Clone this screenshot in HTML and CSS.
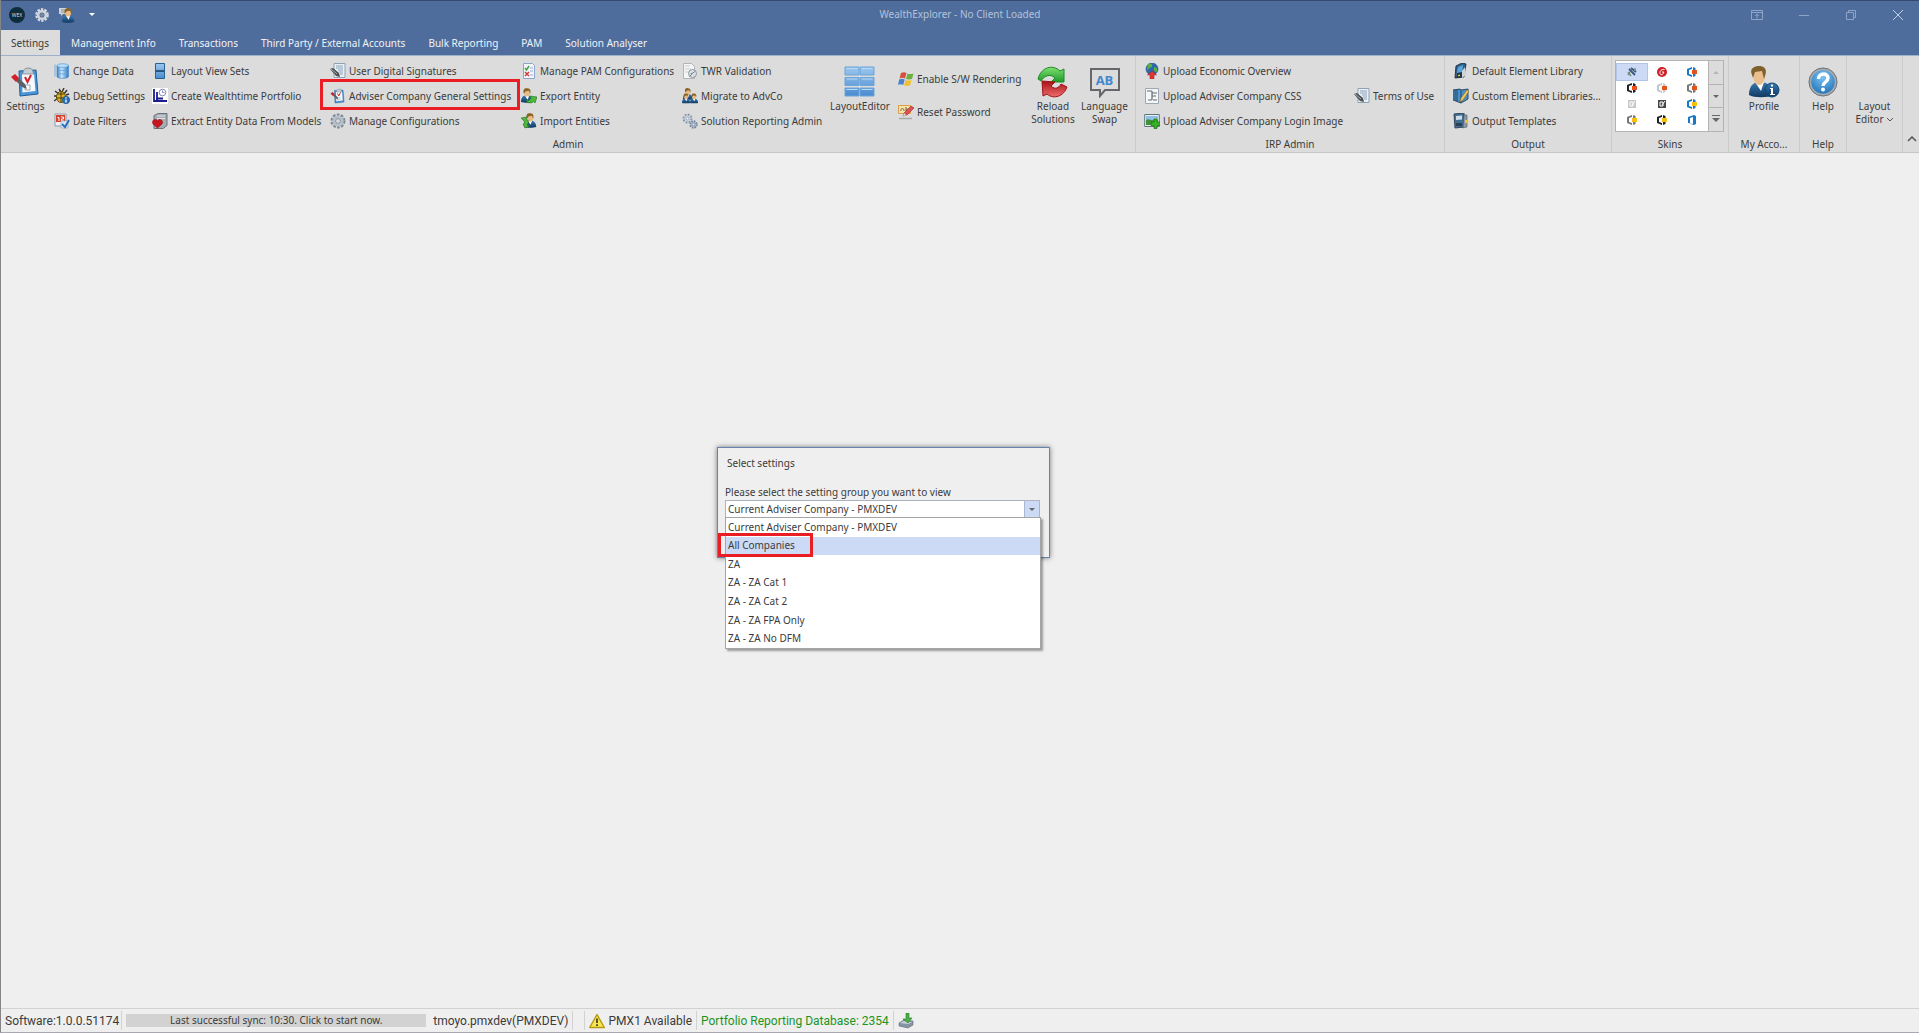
FILE: index.html
```
<!DOCTYPE html>
<html lang="en">
<head>
  <meta charset="UTF-8" />
  <meta name="viewport" content="width=device-width, initial-scale=1.0" />
  <title>WealthExplorer - No Client Loaded</title>
  <link rel="stylesheet" href="styles.css">
</head>
<body>
  <!-- icon sprites -->
  <svg class="sprites" aria-hidden="true">
    <defs>
      <linearGradient id="gBlue" x1="0" y1="0" x2="0" y2="1"><stop offset="0" stop-color="#9cc8ee"/><stop offset="1" stop-color="#4b8bd0"/></linearGradient>
      <linearGradient id="gDb" x1="0" y1="0" x2="1" y2="0"><stop offset="0" stop-color="#2f79c4"/><stop offset=".4" stop-color="#c9e6fb"/><stop offset="1" stop-color="#2c74bd"/></linearGradient>
      <linearGradient id="gGreen" x1="0" y1="0" x2="0" y2="1"><stop offset="0" stop-color="#7ee070"/><stop offset="1" stop-color="#1f9a2a"/></linearGradient>
      <linearGradient id="gRed" x1="0" y1="0" x2="0" y2="1"><stop offset="0" stop-color="#a80f16"/><stop offset="1" stop-color="#ee6d6d"/></linearGradient>
      <radialGradient id="gHelp" cx=".5" cy=".3" r=".8"><stop offset="0" stop-color="#7cc4f4"/><stop offset="1" stop-color="#1266ae"/></radialGradient>
      <linearGradient id="gBody" x1="0" y1="0" x2="0" y2="1"><stop offset="0" stop-color="#3a78b0"/><stop offset="1" stop-color="#0f3a63"/></linearGradient>
    </defs>
    <symbol id="clipboard" viewBox="0 0 32 32">
      <path d="M9 5l17-1 2 24-18 2z" fill="#4b94d6" stroke="#1f609c"/>
      <path d="M12 8l12-1 1.500 18-13 1.500z" fill="#f6f8fb"/>
      <path d="M13 7c0-3 2-5 5-5s5 1 5 4l1 2H12z" fill="#c3cbd3" stroke="#7b858f" stroke-width=".8"/>
      <path d="M15 11l2.500 5 3.500-7" fill="none" stroke="#d2222a" stroke-width="2"/>
      <path d="M15 19h5v5h-5z" fill="#fff" stroke="#9aa4ae"/>
      <path d="M2 11l3-2 10 9 2 5-5-2z" fill="#5b6068"/><path d="M1 11l4-3 4 4-3 4z" fill="#d22026"/>
    </symbol>
    <symbol id="database" viewBox="0 0 16 16">
      <path d="M3 2.500v11C3 16 14.500 16 14.500 13.500v-11z" fill="url(#gDb)" stroke="#3b86cc" stroke-width=".6"/>
      <ellipse cx="8.700" cy="2.600" rx="5.700" ry="1.900" fill="#b7dcf8" stroke="#4f96d6" stroke-width=".6"/>
      <path d="M3 6c0 2 11.500 2 11.500 0M3 9.500c0 2 11.500 2 11.500 0M1 1.500v12" fill="none" stroke="#5da2de" stroke-width=".8"/>
    </symbol>
    <symbol id="bug" viewBox="0 0 16 16">
      <path d="M1 3l4 3M13 2l-3 4M0 8h4M0 13l4-3M12 7l3-1M5 1l2 3M10 0L8 4" stroke="#35332a" stroke-width="1.400"/>
      <ellipse cx="7" cy="9" rx="4.500" ry="5.500" fill="#e6b820" stroke="#5d4a10"/><path d="M3.500 6h7M7 4v10M3 10h8" stroke="#463a15"/>
      <circle cx="12" cy="12" r="3.700" fill="#2a71b8" stroke="#134a80" stroke-width=".6"/><path d="M12 11.500v3M12 9.300v1.200" stroke="#fff" stroke-width="1.300"/>
    </symbol>
    <symbol id="datefilter" viewBox="0 0 16 16">
      <path d="M1 1h11v12H1z" fill="#eef1f5" stroke="#8c9aaa"/><path d="M2 2h9v7H2z" fill="#d8402e"/>
      <path d="M3.500 4.500h1.500V8M7 4h2.500v2H7.500v2H10" fill="none" stroke="#fff"/>
      <path d="M7 8h7v7H7z" fill="#dbe8f5" stroke="#8ca3bb" stroke-width=".6"/><path d="M8 11l3 3 4-7" fill="none" stroke="#2d72b8" stroke-width="2"/>
    </symbol>
    <symbol id="layoutsets" viewBox="0 0 16 16">
      <path d="M3.500.5h9v7h-9zM3.500 8.500h9v7h-9z" fill="url(#gBlue)" stroke="#29618f"/><path d="M3 7.500h10v1.500H3z" fill="#24557e"/>
    </symbol>
    <symbol id="portfolio" viewBox="0 0 16 16">
      <path d="M0 0h16v16H0z" fill="#fff"/><path d="M2 1v12h13M5 4v6.500h6" fill="none" stroke="#1c1c8e" stroke-width="1.800"/><path d="M2 13h3M5 10v4" stroke="#1c1c8e" stroke-width="2"/>
      <circle cx="10.500" cy="4.500" r="3.300" fill="#fff" stroke="#8686c4"/><path d="M10.500 2.500v2h2" fill="none" stroke="#8686c4"/>
    </symbol>
    <symbol id="heartdb" viewBox="0 0 16 16">
      <path d="M2 2.500L6 .5h9v12l-4 3H2z" fill="#a6acb4" stroke="#6b727c"/><path d="M5 3h8M5 5.500h8" stroke="#e1e5e9"/>
      <path d="M5.500 15L1 11c-2-4 3-6 4.500-3C7 5 12 7 10 11z" fill="#c9151e" stroke="#8a0e14" stroke-width=".6"/>
    </symbol>
    <symbol id="signature" viewBox="0 0 16 16">
      <path d="M4 .5h11v14H4z" fill="#e9eff5" stroke="#8fa2b4"/><path d="M6 3h7M6 5h7M8 7h5M9 9h4M10 11h3" stroke="#8ba4bd"/>
      <path d="M0 6l3-1 6 5 1 4-4-1z" fill="#4d5052"/><path d="M1 6l6 5" stroke="#a9adb0"/>
    </symbol>
    <symbol id="gear" viewBox="0 0 16 16">
      <circle cx="8" cy="8" r="6" fill="none" stroke="#7d8894" stroke-width="3" stroke-dasharray="2.500 1.270"/>
      <circle cx="8" cy="8" r="4.200" fill="none" stroke="#b5c0cb" stroke-width="3"/><circle cx="8" cy="8" r="2.400" fill="#dcdcdc" stroke="#76828e" stroke-width=".8"/>
    </symbol>
    <symbol id="geartitle" viewBox="0 0 16 16">
      <circle cx="8" cy="8" r="5.500" fill="none" stroke="#d7dce4" stroke-width="2.600" stroke-dasharray="2.300 1.155"/>
      <circle cx="8" cy="8" r="3.800" fill="none" stroke="#d0d5dc" stroke-width="2.500"/><circle cx="8" cy="8" r="1.800" fill="#7b8aa0"/>
    </symbol>
    <symbol id="gears" viewBox="0 0 16 16">
      <circle cx="5.500" cy="5.500" r="4" fill="#cfd7e2" stroke="#8795a8" stroke-width="2" stroke-dasharray="1.800 1.300"/><circle cx="5.500" cy="5.500" r="1.500" fill="#f0f0f0" stroke="#8795a8" stroke-width=".7"/>
      <circle cx="11.500" cy="11.500" r="3.200" fill="#bcc8d8" stroke="#71829a" stroke-width="2" stroke-dasharray="1.500 1"/><circle cx="11.500" cy="11.500" r="1.200" fill="#f0f0f0" stroke="#71829a" stroke-width=".7"/>
    </symbol>
    <symbol id="checkdoc" viewBox="0 0 16 16">
      <path d="M2.500.5h9l2 2v13h-11z" fill="#f2f6fc" stroke="#8fa4cc"/><path d="M9 5h3M9 8h3M9 12h3" stroke="#8faed8"/>
      <path d="M4 5l1.500 2L8 3" fill="none" stroke="#3fa33c" stroke-width="1.500"/><path d="M4 9l4 4M8 9l-4 4" stroke="#d23a3a" stroke-width="1.500"/>
    </symbol>
    <symbol id="person" viewBox="0 0 16 16">
      <path d="M0 15c0-5 2-7 6-7s7 2 7 7c-3 1-10 1-13 0z" fill="url(#gBody)"/><path d="M4.500 8.500l2.500 4 1.500-4z" fill="#fff"/>
      <ellipse cx="6.500" cy="5" rx="3.200" ry="4" fill="#e8ba86"/><path d="M3 6C1.500 0 5 0 6.500.2 10.500 0 10.500 4 9.800 6L8.500 3 5 3.500z" fill="#8a6324"/>
    </symbol>
    <symbol id="export" viewBox="0 0 16 16">
      <use href="#person" width="15" height="15"/><path d="M5 12c3 1 4 0 5-2l-1-2 7 1-2 6-1.500-1.500C10 16 6 15 5 12z" fill="#4fb83c" stroke="#1d7018" stroke-width=".6"/>
    </symbol>
    <symbol id="import" viewBox="0 0 16 16">
      <use href="#person" x="3" width="15" height="15"/><path d="M0 5l6-1-1 2c3 1 3 4 1 6l3 1-5 2-2-4h1c1-2 0-3-1-4z" fill="#4fb83c" stroke="#1d7018" stroke-width=".6"/>
    </symbol>
    <symbol id="people" viewBox="0 0 16 16">
      <use href="#person" x="1" width="12" height="12"/><use href="#person" y="5" width="10" height="11"/><use href="#person" x="8" y="5" width="10" height="11"/>
    </symbol>
    <symbol id="twrdoc" viewBox="0 0 16 16">
      <path d="M1.500.5h8l3 3v12h-11z" fill="#f6f6f6" stroke="#b0b4b8"/><path d="M3 3h5M3 6h6M3 9h4" stroke="#c7ccd0"/>
      <circle cx="10.500" cy="10.500" r="4" fill="#dde2e6" stroke="#8c959d"/><path d="M8.500 10.500h1.500l3-2M10.500 10.500l-3 3" stroke="#7c858d" fill="none"/>
    </symbol>
    <symbol id="tiles" viewBox="0 0 32 32">
      <path d="M1 1h14v8H1zM16 1h14v8H16zM1 11.500h14v8H1zM16 11.500h14v8H16zM1 22h14v8H1zM16 22h14v8H16z" fill="url(#gBlue)" stroke="#6ba4d8"/>
      <path d="M2.500 2.500h11M17.500 2.500h11M2.500 13h11M17.500 13h11M2.500 23.500h11M17.500 23.500h11" stroke="#b7d9f6"/>
    </symbol>
    <symbol id="windows" viewBox="0 0 16 16">
      <path d="M3 2c2-1 4-1 5.500 0L7 7.500c-1.500-1-3.500-1-5.500 0z" fill="#d9503c"/><path d="M9.500 2.500c2 1 4 .5 6 0L14 8c-2 .6-4 .6-6 0z" fill="#6bb13f"/>
      <path d="M1.200 8.500c2-1 4-1 5.500 0L5.200 14c-2-1-4-1-5.200 0z" fill="#4a82cf"/><path d="M7.500 9c2 1 4 .5 6 0L12 14.500c-2 .6-4 .6-6 0z" fill="#f0c030"/>
    </symbol>
    <symbol id="password" viewBox="0 0 16 16">
      <path d="M.5 1.500h12v8H.5z" fill="#fbe3a8" stroke="#dba048"/><path d="M3 7c-1-3 3-3 3-1v1M8 3v4c3 1 3-3 0-2" fill="none" stroke="#6d6650"/>
      <path d="M5 12l1-3 7-7 3 2-7 7z" fill="#e05050" stroke="#8a3030" stroke-width=".6"/><path d="M5 12l1-3 2.500 2.500z" fill="#d7dce0"/><path d="M1 14.500h13" stroke="#a9a9a9" stroke-width="1.500"/>
    </symbol>
    <symbol id="reload" viewBox="0 0 32 32">
      <path d="M1 13C4 1 16-2 23 5l4-2v13l-13 0 4-4c-5-5-11-2-14 3z" fill="url(#gGreen)" stroke="#1d8a24"/>
      <path d="M5 15l13 1-4 4c4 4 8 2 10-2l6 3c-3 9-13 13-20 7l-4 2z" fill="url(#gRed)" stroke="#9c1218"/>
    </symbol>
    <symbol id="bubble" viewBox="0 0 32 32"><path d="M2 3h28v21H16l-5 6v-6H2z" fill="none" stroke="#66676b" stroke-width="2"/></symbol>
    <symbol id="globe" viewBox="0 0 16 16">
      <circle cx="8" cy="6" r="6" fill="#2b68b0" stroke="#254c80" stroke-width=".6"/><path d="M4 1c3-1 5 0 4 3-3 0-3 3-5 3zM10 4l3 1v4l-3-1z" fill="#58b045"/>
      <path d="M8 8l4.500 4H10v4H6v-4H3.500z" fill="#dd3535" stroke="#a32020" stroke-width=".5"/>
    </symbol>
    <symbol id="css" viewBox="0 0 16 16"><path d="M1.500.5h13v15h-13z" fill="#f5f6f8" stroke="#9da7b1"/><path d="M3 3h5M8 3v9M8 5h5M8 8h4M4 12h4M9 12h4" stroke="#666c72" stroke-width="1.200"/></symbol>
    <symbol id="imageadd" viewBox="0 0 16 16">
      <path d="M.7 1.500h14.600v12H.7z" fill="#e8eef2" stroke="#62747e"/><path d="M2 3h12v5H2z" fill="#8fc0e4"/><path d="M2 7c3-2 5 1 7 0s3 0 5 0v5H2z" fill="#41903c"/>
      <path d="M10 6h3v3h3v3.500h-3v3h-3v-3H7V9h3z" fill="#37b324" stroke="#19750f" stroke-width=".7"/>
    </symbol>
    <symbol id="library" viewBox="0 0 16 16"><path d="M3 3l6-3 4 1-2 13-9 1z" fill="#315c86" stroke="#24384c"/><path d="M5 4l5-2-1 11-6 1z" fill="#5aa2dc"/><path d="M9 8l3-4 1 8-4 3z" fill="#cdd4da"/><path d="M4 10l5-1v5l-6 1z" fill="#263442"/><path d="M5 12l2-.5v1.500l-2 .3z" fill="#f2cf3c"/></symbol>
    <symbol id="libedit" viewBox="0 0 16 16"><path d="M0 2l7-1 1 1 7-1v10l-7 4-8-3z" fill="#4a8fc8" stroke="#294c6a"/><path d="M4 1.500V13M8 2v13M2 2v10" stroke="#23496b"/><path d="M7 14l1-4 6-8 2 1-6 9z" fill="#f0c760" stroke="#8f6a24" stroke-width=".6"/></symbol>
    <symbol id="template" viewBox="0 0 16 16"><path d="M1 1l10-1v14l-9 1z" fill="#446d92" stroke="#30465a"/><path d="M3 3l6-.5v4L3 7z" fill="#c9dcea"/><path d="M11 2h3v12l-4 1z" fill="#8d98a3" stroke="#4d5863" stroke-width=".6"/><path d="M12 7h2v3h-2z" fill="#f0c83e"/><path d="M3 10h6v3H3z" fill="#2b4056"/></symbol>
    <symbol id="profile" viewBox="0 0 32 32">
      <path d="M1 29C1 20 5 16 12 16s13 4 13 13c-5 3-19 3-24 0z" fill="url(#gBody)"/><path d="M7 16l6 9 3-9z" fill="#fff"/>
      <path d="M5 8c0-6 12-6 12 0 0 6-2 11-6 11S5 14 5 8z" fill="#e9c08d"/><path d="M4 9C1 2 7 0 11 0s9 2 6 10l-1 3-2-8-7 1-2 6z" fill="#80602c"/>
      <circle cx="24" cy="24" r="7" fill="url(#gBody)" stroke="#0c4778"/><path d="M22 22h3v6h2v1h-5v-1h1v-5h-1zM23 18.500h2v2h-2z" fill="#fff"/>
    </symbol>
    <symbol id="help" viewBox="0 0 32 32">
      <circle cx="16" cy="16" r="13" fill="url(#gHelp)" stroke="#a6abb0" stroke-width="2.500"/><circle cx="16" cy="16" r="14" fill="none" stroke="#6f747a"/>
      <path d="M11.500 13c0-7 10-6 9.500-1 0 4-5 4-5 8" fill="none" stroke="#fff" stroke-width="3.400"/><circle cx="16" cy="23.500" r="2" fill="#fff"/>
    </symbol>
    <symbol id="wex" viewBox="0 0 16 16"><circle cx="8" cy="8" r="8" fill="#0d2c3c"/></symbol>
    <symbol id="chatuser" viewBox="0 0 16 16"><path d="M0 1h8v6H4l-2 2V7H0z" fill="#cfd3d6"/><path d="M2 3h5M2 5h4" stroke="#8e959c"/><use href="#person" x="3" y="1" width="15" height="15"/></symbol>
    <symbol id="warning" viewBox="0 0 16 16"><path d="M8 1.500L15.300 14.500H.7z" fill="#f7e552" stroke="#b89a12" stroke-width="1.400" stroke-linejoin="round"/><path d="M8 5.500v4.500M8 11.300v1.800" stroke="#3b3a24" stroke-width="1.700"/></symbol>
    <symbol id="download" viewBox="0 0 16 16"><path d="M1 10l5-3 9 1v4l-5 3-9-2z" fill="#8794a4" stroke="#5f6b79" stroke-width=".6"/><path d="M2 10l4-2 8 1-4 2z" fill="#c9d3de"/><path d="M8 0h3v5h3l-4 5-5-4h3z" fill="#4fae48" stroke="#1f7a1e" stroke-width=".6"/></symbol>
    <!-- skin gallery: currentColor is the door, --badge the small square -->
    <symbol id="office" viewBox="0 0 10 10"><path d="M0 2l5-2v2L2 3v4l3 1v2L0 8zM6 0l2.500 1v8L6 10z" fill="currentColor"/><path d="M5 3h5v4H5z" class="badge"/></symbol>
    <symbol id="officeplain" viewBox="0 0 10 10"><path d="M1 2l6-2 2 1v8l-2 1-6-2V8l5 1V2L3 3v5L1 8z" fill="currentColor"/></symbol>
    <symbol id="skinsquare" viewBox="0 0 10 10"><path d="M1 1h8v8H1z" fill="currentColor"/><path d="M3 3h3v4H3zM5 6l3-4" fill="none" stroke="#fff"/></symbol>
    <symbol id="skinx" viewBox="0 0 10 10"><path d="M2 2l6 6M4 1l5 4" fill="none" stroke="#38547f" stroke-width="1.800"/><path d="M1 5l3 4M8 1v3M1 8l2-3" stroke="#6f8f7c" stroke-width="1.400"/></symbol>
    <symbol id="skinc" viewBox="0 0 10 10"><circle cx="5" cy="5" r="5" fill="#cf1f28"/><path d="M7.500 2.500C4 2 2.500 4.500 3 6.500s3.500 1.500 3.800-1.500H5" fill="none" stroke="#fff"/></symbol>
  </svg>

  <header class="titlebar">
    <div class="quick">
      <button class="wex" aria-label="Application menu"><svg class="i16"><use href="#wex"/></svg><span>WEX</span></button>
      <button aria-label="Options"><svg class="i16"><use href="#geartitle"/></svg></button>
      <button aria-label="Clients"><svg class="i16"><use href="#chatuser"/></svg></button>
      <button aria-label="Customise toolbar"><span class="caret light"></span></button>
    </div>
    <h1>WealthExplorer - No Client Loaded</h1>
    <div class="winbuttons">
      <button aria-label="Ribbon display"><svg viewBox="0 0 12 12"><path d="M.5 1.500h11v9H.5zM.5 3.500h11M6 9.500v-4M4 7l2-2 2 2"/></svg></button>
      <button aria-label="Minimise"><svg viewBox="0 0 12 12"><path d="M1 6.500h10"/></svg></button>
      <button aria-label="Restore"><svg viewBox="0 0 12 12"><path d="M1.500 3.500h7v7h-7zM3.500 3.500v-2h7v7h-2"/></svg></button>
      <button class="close" aria-label="Close"><svg viewBox="0 0 12 12"><path d="M1 1l10 10M11 1L1 11"/></svg></button>
    </div>
  </header>

  <nav class="tabs">
    <button class="active">Settings</button>
    <button>Management Info</button>
    <button>Transactions</button>
    <button>Third Party / External Accounts</button>
    <button>Bulk Reporting</button>
    <button>PAM</button>
    <button>Solution Analyser</button>
  </nav>

  <section class="ribbon">
    <div class="group">
      <div class="items admin">
        <button class="big"><svg class="i32"><use href="#clipboard"/></svg>Settings</button>
        <div class="col">
          <button class="cmd"><svg class="i16"><use href="#database"/></svg>Change Data</button>
          <button class="cmd"><svg class="i16"><use href="#bug"/></svg>Debug Settings</button>
          <button class="cmd"><svg class="i16"><use href="#datefilter"/></svg>Date Filters</button>
        </div>
        <div class="col">
          <button class="cmd"><svg class="i16"><use href="#layoutsets"/></svg>Layout View Sets</button>
          <button class="cmd"><svg class="i16"><use href="#portfolio"/></svg>Create Wealthtime Portfolio</button>
          <button class="cmd"><svg class="i16"><use href="#heartdb"/></svg>Extract Entity Data From Models</button>
        </div>
        <div class="col">
          <button class="cmd"><svg class="i16"><use href="#signature"/></svg>User Digital Signatures</button>
          <button class="cmd marked"><svg class="i16"><use href="#clipboard"/></svg>Adviser Company General Settings</button>
          <button class="cmd"><svg class="i16"><use href="#gear"/></svg>Manage Configurations</button>
        </div>
        <div class="col">
          <button class="cmd"><svg class="i16"><use href="#checkdoc"/></svg>Manage PAM Configurations</button>
          <button class="cmd"><svg class="i16"><use href="#export"/></svg>Export Entity</button>
          <button class="cmd"><svg class="i16"><use href="#import"/></svg>Import Entities</button>
        </div>
        <div class="col">
          <button class="cmd"><svg class="i16"><use href="#twrdoc"/></svg>TWR Validation</button>
          <button class="cmd"><svg class="i16"><use href="#people"/></svg>Migrate to AdvCo</button>
          <button class="cmd"><svg class="i16"><use href="#gears"/></svg>Solution Reporting Admin</button>
        </div>
        <button class="big"><svg class="i32"><use href="#tiles"/></svg>LayoutEditor</button>
        <div class="col two">
          <button class="cmd"><svg class="i16"><use href="#windows"/></svg>Enable S/W Rendering</button>
          <button class="cmd"><svg class="i16"><use href="#password"/></svg>Reset Password</button>
        </div>
        <button class="big"><svg class="i32"><use href="#reload"/></svg>Reload<br>Solutions</button>
        <button class="big lang"><svg class="i32"><use href="#bubble"/></svg><b>AB</b>Language<br>Swap</button>
      </div>
      <div class="caption">Admin</div>
    </div>

    <div class="group">
      <div class="items irp">
        <div class="col">
          <button class="cmd"><svg class="i16"><use href="#globe"/></svg>Upload Economic Overview</button>
          <button class="cmd"><svg class="i16"><use href="#css"/></svg>Upload Adviser Company CSS</button>
          <button class="cmd"><svg class="i16"><use href="#imageadd"/></svg>Upload Adviser Company Login Image</button>
        </div>
        <div class="col middle">
          <button class="cmd"><svg class="i16"><use href="#signature"/></svg>Terms of Use</button>
        </div>
      </div>
      <div class="caption">IRP Admin</div>
    </div>

    <div class="group">
      <div class="items output">
        <div class="col">
          <button class="cmd"><svg class="i16"><use href="#library"/></svg>Default Element Library</button>
          <button class="cmd"><svg class="i16"><use href="#libedit"/></svg>Custom Element Libraries...</button>
          <button class="cmd"><svg class="i16"><use href="#template"/></svg>Output Templates</button>
        </div>
      </div>
      <div class="caption">Output</div>
    </div>

    <div class="group skins">
      <div class="items">
        <div class="gallery">
          <div class="swatches">
            <button class="selected" aria-label="Skin 1"><svg><use href="#skinx"/></svg></button>
            <button aria-label="Skin 2"><svg><use href="#skinc"/></svg></button>
            <button class="blue orange" aria-label="Skin 3"><svg><use href="#office"/></svg></button>
            <button class="black orange" aria-label="Skin 4"><svg><use href="#office"/></svg></button>
            <button class="pale orange" aria-label="Skin 5"><svg><use href="#office"/></svg></button>
            <button class="grey orange" aria-label="Skin 6"><svg><use href="#office"/></svg></button>
            <button class="pale" aria-label="Skin 7"><svg><use href="#skinsquare"/></svg></button>
            <button class="dark" aria-label="Skin 8"><svg><use href="#skinsquare"/></svg></button>
            <button class="blue yellow" aria-label="Skin 9"><svg><use href="#office"/></svg></button>
            <button class="grey yellow" aria-label="Skin 10"><svg><use href="#office"/></svg></button>
            <button class="black yellow" aria-label="Skin 11"><svg><use href="#office"/></svg></button>
            <button class="blue" aria-label="Skin 12"><svg><use href="#officeplain"/></svg></button>
          </div>
          <div class="scroller">
            <button aria-label="Scroll up" disabled><span class="caret up"></span></button>
            <button aria-label="Scroll down"><span class="caret"></span></button>
            <button aria-label="More skins"><span class="caret more"></span></button>
          </div>
        </div>
      </div>
      <div class="caption">Skins</div>
    </div>

    <div class="group account">
      <div class="items"><button class="big"><svg class="i32"><use href="#profile"/></svg>Profile</button></div>
      <div class="caption">My Acco...</div>
    </div>
    <div class="group helpbox">
      <div class="items"><button class="big"><svg class="i32"><use href="#help"/></svg>Help</button></div>
      <div class="caption">Help</div>
    </div>
    <div class="group layout">
      <div class="items"><button class="big"><svg class="i32"></svg>Layout<span>Editor <svg class="chev" viewBox="0 0 8 6"><path d="M1 1l3 3 3-3"/></svg></span></button></div>
    </div>
    <button class="collapse" aria-label="Collapse ribbon"><svg viewBox="0 0 10 6"><path d="M1 5l4-4 4 4"/></svg></button>
  </section>

  <main>
    <div class="dialog" role="dialog" aria-labelledby="dlgTitle">
      <h2 id="dlgTitle">Select settings</h2>
      <label for="settingGroup">Please select the setting group you want to view</label>
      <div class="combo">
        <select id="settingGroup"><option>Current Adviser Company - PMXDEV</option></select>
        <span class="drop"><span class="caret"></span></span>
        <ul class="options" role="listbox">
          <li>Current Adviser Company - PMXDEV</li>
          <li class="hover">All Companies</li>
          <li>ZA</li>
          <li>ZA - ZA Cat 1</li>
          <li>ZA - ZA Cat 2</li>
          <li>ZA - ZA FPA Only</li>
          <li>ZA - ZA No DFM</li>
        </ul>
      </div>
    </div>
  </main>

  <footer class="status">
    <span class="cell version">Software:1.0.0.51174</span>
    <button class="sync">Last successful sync: 10:30. Click to start now.</button>
    <span class="cell user">tmoyo.pmxdev(PMXDEV)</span>
    <span class="cell blank"></span>
    <span class="cell"><svg class="i16"><use href="#warning"/></svg>PMX1 Available</span>
    <span class="cell db">Portfolio Reporting Database: 2354</span>
    <span class="cell last"><svg class="i16"><use href="#download"/></svg></span>
  </footer>
</body>
</html>
```
FILE: styles.css
```
*, *::before, *::after { box-sizing: border-box; }
body {
  margin: 0;
  height: 100vh;
  display: flex;
  flex-direction: column;
  background: #efefef;
  border-left: 1px solid #858585;
  border-bottom: 1px solid #a9a9b4;
  font: 10px/13px "Noto Sans", sans-serif;
  color: #3b3b3b;
  overflow: hidden;
}
button { margin: 0; padding: 0; border: 0; background: none; font: inherit; color: inherit; white-space: nowrap; }
svg { display: block; flex: none; }
.sprites { position: absolute; width: 0; height: 0; }
.i16 { width: 16px; height: 16px; }
.i32 { width: 32px; height: 32px; }

.caret { display: block; width: 6px; height: 3px; border: 3px solid transparent; border-top-color: #666; border-bottom: 0; }
.caret.light { border-top-color: #fff; }
.caret.up { border-top: 0; border-bottom: 3px solid #b5b5b5; }
.caret.more { position: relative; width: 8px; height: 4px; border-width: 4px 4px 0; }
.caret.more::before { content: ""; position: absolute; left: -4px; top: -7px; width: 8px; height: 1px; background: #666; }

/* title bar */
.titlebar {
  height: 30px; flex: none; display: grid; grid-template-columns: 1fr auto 1fr; align-items: center;
  padding-bottom: 2px; background: #4f6d9c; border-top: 1px solid #34496c;
}
.titlebar h1 { margin: 0; font-size: 10px; font-weight: 400; color: #b3c2da; }
.quick { display: flex; align-items: center; gap: 9px; padding-left: 8px; }
.quick button:last-child { margin-left: 5px; }
.wex { position: relative; }
.wex span { position: absolute; inset: 0; font-size: 5px; line-height: 16px; text-align: center; color: #d5dde2; }
.winbuttons { display: flex; justify-content: flex-end; padding-right: 15px; gap: 35px; }
.winbuttons svg { width: 12px; height: 12px; fill: none; stroke: #8fa4c6; }
.winbuttons .close svg { stroke: #c3cfe2; }

.tabs { height: 25px; flex: none; display: flex; background: #4f6d9c; }
.tabs button { padding: 2px 12px 0 11px; color: #f0f3f8; }
.tabs .active { padding: 2px 11px 0 10px; background: #dcdcdc; color: #3b3b3b; }

/* ribbon */
.ribbon { height: 98px; flex: none; display: flex; background: #dcdcdc; border-top: 1px solid #9fb0ca; border-bottom: 1px solid #c6c6c6; }
.group { display: flex; flex-direction: column; border-right: 1px solid #cbcbcb; }
.items { flex: 1; display: flex; padding-top: 3px; }
.caption { height: 15px; line-height: 14px; text-align: center; }
.admin { display: grid; grid-template-columns: 49px 98px 178px 191px 161px 148px 68px 134px 50px 53px; padding-right: 4px; }
.irp { display: grid; grid-template-columns: 210px 94px; padding-left: 4px; }
.output { width: 166px; padding-left: 4px; }
.col { display: flex; flex-direction: column; gap: 1px; align-items: flex-start; }
.col.middle { padding-top: 25px; }
.col.two { padding-top: 8px; gap: 9px; }
.cmd { height: 24px; display: flex; align-items: center; gap: 3px; padding: 0 4px; }
.big { display: flex; flex-direction: column; align-items: center; padding-top: 7px; }
.big .i32 { margin-bottom: 2px; }
.marked { position: relative; }
.marked::after { content: ""; position: absolute; left: -6px; top: -5px; width: 200px; height: 31px; border: 3px solid #ea1c24; }
.lang { position: relative; }
.lang b { position: absolute; top: 14px; left: 0; right: 0; font: bold 13px/14px "Open Sans", sans-serif; color: #4287cf; }

.skins { width: 117px; }
.account { width: 71px; }
.helpbox { width: 47px; }
.layout { width: 56px; }
.account .big, .helpbox .big, .layout .big { flex: 1; }
.layout .big span { display: flex; align-items: center; gap: 2px; }
.chev { width: 8px; height: 6px; fill: none; stroke: #555; }
.gallery { display: flex; height: 72px; margin: 1px 0 0 3px; width: 109px; border: 1px solid #b4b4b4; background: #fff; }
.swatches { flex: 1; display: grid; grid-template-columns: repeat(3, 30px); grid-auto-rows: 16px; padding: 3px 1px; }
.swatches button { display: flex; align-items: center; justify-content: center; }
.swatches svg { width: 10px; height: 10px; }
.swatches .selected { background: #cddaf5; outline: 1px solid #b3c4e6; }
.blue { color: #1976c8; }
.black { color: #222; }
.pale { color: #c6c6cc; }
.grey { color: #777; }
.dark { color: #484848; }
.orange { --badge: #e8501e; }
.yellow { --badge: #f8bf12; }
.badge { fill: var(--badge, currentColor); }
.scroller { width: 16px; display: flex; flex-direction: column; background: #dcdcdc; border-left: 1px solid #b4b4b4; }
.scroller button { flex: 1; display: flex; align-items: center; justify-content: center; }
.scroller button + button { border-top: 1px solid #b4b4b4; }
.collapse { margin-left: auto; align-self: flex-end; padding: 0 2px 10px; }
.collapse svg { width: 10px; height: 6px; fill: none; stroke: #555; stroke-width: 1.5; }

/* work area */
main { flex: 1; position: relative; }
.dialog {
  position: absolute; left: 716px; top: 294px; width: 333px; height: 111px;
  padding: 9px 9px 9px 7px; background: #efefef; border: 1px solid #6584ae; box-shadow: 0 0 5px rgba(0, 0, 0, .5);
}
.dialog h2 { margin: 0 0 16px 2px; font-size: 10px; line-height: 13px; font-weight: 400; }
.dialog label { display: block; }
.combo { position: relative; display: flex; margin-top: 1px; height: 18px; border: 1px solid #aeb4bd; background: #fff; }
.combo select { flex: 1; appearance: none; border: 0; padding: 0 2px; background: none; font: inherit; color: inherit; }
.drop { width: 15px; display: flex; align-items: center; justify-content: center; background: #cddaf5; border-left: 1px solid #a9b8d2; }
.options {
  position: absolute; left: -1px; right: -2px; top: 16px; height: 132px; margin: 0; padding: 0;
  display: grid; grid-auto-rows: 1fr; list-style: none; background: #fff; border: 1px solid #a5a5a5; box-shadow: 2px 2px 2px rgba(0, 0, 0, .35);
}
.options li { display: flex; align-items: center; padding-left: 2px; }
.options .hover { position: relative; background: #cddaf5; }
.options .hover::after { content: ""; position: absolute; left: -8px; top: -4px; width: 95px; height: 24px; border: 3px solid #ea1c24; }

/* status bar */
.status { height: 24px; flex: none; display: flex; align-items: center; border-top: 1px solid #d2d2d2; font: 12px/16px Roboto, sans-serif; }
.cell { display: flex; align-items: center; gap: 3px; height: 19px; padding: 0 4px; border-right: 1px solid #d2d2d2; white-space: nowrap; }
.version { padding-right: 2px; }
.sync { width: 300px; height: 13px; margin: 0 3px 0 4px; background: #d2d2d2; font: 10px/13px "Noto Sans", sans-serif; }
.blank { width: 12px; }
.db { color: #1c941c; }
.last { border: 0; }
```
